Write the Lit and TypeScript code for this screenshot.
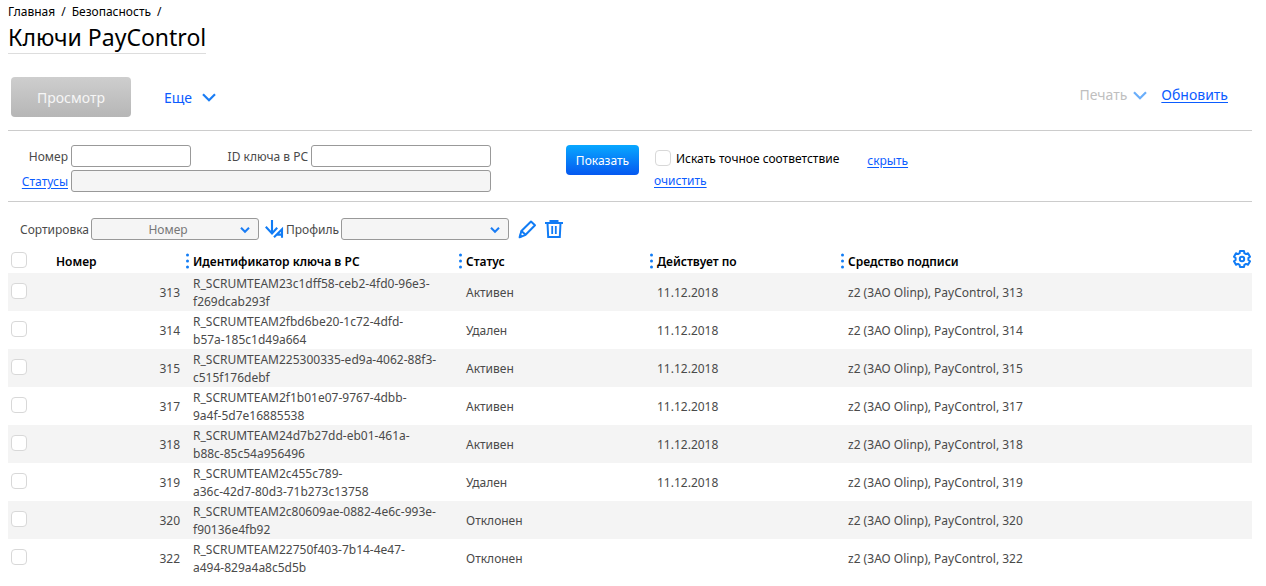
import { LitElement, html, css, svg } from "lit";
import { customElement, state } from "lit/decorators.js";

interface KeyRow {
  num: number;
  id: [string, string];
  status: string;
  until: string;
}

const ROWS: KeyRow[] = [
  { num: 313, id: ["R_SCRUMTEAM23c1dff58-ceb2-4fd0-96e3-", "f269dcab293f"], status: "Активен", until: "11.12.2018" },
  { num: 314, id: ["R_SCRUMTEAM2fbd6be20-1c72-4dfd-", "b57a-185c1d49a664"], status: "Удален", until: "11.12.2018" },
  { num: 315, id: ["R_SCRUMTEAM225300335-ed9a-4062-88f3-", "c515f176debf"], status: "Активен", until: "11.12.2018" },
  { num: 317, id: ["R_SCRUMTEAM2f1b01e07-9767-4dbb-", "9a4f-5d7e16885538"], status: "Активен", until: "11.12.2018" },
  { num: 318, id: ["R_SCRUMTEAM24d7b27dd-eb01-461a-", "b88c-85c54a956496"], status: "Активен", until: "11.12.2018" },
  { num: 319, id: ["R_SCRUMTEAM2c455c789-", "a36c-42d7-80d3-71b273c13758"], status: "Удален", until: "11.12.2018" },
  { num: 320, id: ["R_SCRUMTEAM2c80609ae-0882-4e6c-993e-", "f90136e4fb92"], status: "Отклонен", until: "" },
  { num: 322, id: ["R_SCRUMTEAM22750f403-7b14-4e47-", "a494-829a4a8c5d5b"], status: "Отклонен", until: "" },
];

const chevron = (cls: string) => html`<svg class=${cls} viewBox="0 0 14 9" aria-hidden="true">
  ${svg`<path d="M1 1.2 L7 7.2 L13 1.2" fill="none" stroke="currentColor" />`}
</svg>`;

const dots = html`<svg class="dots" width="3" height="16" viewBox="0 0 3 16" aria-hidden="true">
  <circle cx="1.5" cy="2" r="1.5" /><circle cx="1.5" cy="8" r="1.5" /><circle cx="1.5" cy="14" r="1.5" />
</svg>`;

@customElement("app-root")
export class AppRoot extends LitElement {
  @state() private selected = new Set<number>();

  static styles = css`
    :host {
      display: block;
      padding: 4px 14px 0 8px;
      background: #fff;
      color: #4a4a4a;
      font-family: "Noto Sans", "Open Sans", sans-serif;
      font-size: 12px;
      line-height: 18px;
    }
    * { box-sizing: border-box; }
    button, input, select { font: inherit; margin: 0; }
    a { color: #0b5cff; text-decoration: underline; text-underline-offset: 2px; }
    svg { display: block; flex: none; }

    .crumbs { display: flex; gap: 6px; line-height: 16px; color: #000; }
    .crumbs a { color: inherit; text-decoration: none; }
    .title {
      width: fit-content;
      margin: 0;
      padding-top: 1px;
      border-bottom: 1px solid #ddd;
      font-size: 23px;
      line-height: 32px;
      font-weight: 400;
      color: #000;
    }

    .toolbar {
      display: flex;
      align-items: center;
      padding: 23px 24px 13px 3px;
      border-bottom: 1px solid #ccc;
      font-size: 14px;
      line-height: 20px;
    }
    .view {
      width: 120px;
      height: 40px;
      padding: 2px 0 0;
      border: 0;
      border-radius: 4px;
      background: linear-gradient(#cecece, #b6b6b6);
      color: #f6f6f6;
    }
    .menu {
      display: flex;
      align-items: center;
      gap: 10px;
      padding: 1px 0 0;
      border: 0;
      background: none;
      color: #0b5cff;
    }
    .more { margin-left: 33px; }
    .right { display: flex; align-items: center; gap: 14px; margin: 0 0 5px auto; }
    .menu:disabled { color: #bfbfbf; gap: 6px; }
    .chev { width: 14px; height: 9px; color: #1a7df5; stroke-width: 2.2; }
    .menu:disabled .chev { color: #6aaefa; }

    .filter {
      display: flex;
      align-items: flex-start;
      padding: 14px 0 9px 0;
      border-bottom: 1px solid #ccc;
    }
    .fields {
      display: grid;
      grid-template-columns: 60px 120px 114px 180px;
      column-gap: 3px;
      row-gap: 3px;
      align-items: center;
      text-align: right;
    }
    .fields label, .fields a { padding-top: 1px; }
    .box {
      width: 100%;
      height: 22px;
      padding: 0 6px;
      border: 1px solid #999;
      border-radius: 3px;
      background: #fff;
      color: inherit;
    }
    .box:read-only { background: #f5f5f5; }
    .wide { grid-column: 2 / 5; }
    .show {
      width: 73px;
      height: 30px;
      margin-left: 75px;
      padding: 1px 0 0;
      border: 0;
      border-radius: 4px;
      background: linear-gradient(#08a8ff, #0558f0);
      color: #fff;
    }
    .options { margin: 5px 0 0 15px; color: #000; }
    .exact { display: flex; align-items: center; gap: 5px; }
    .clear { display: block; width: fit-content; margin-top: 4px; }
    .hide { margin: 7px 0 0 28px; }
    .tick {
      appearance: none;
      display: block;
      width: 16px;
      height: 16px;
      border: 1px solid #d8d8d8;
      border-radius: 4px;
      background: #fff;
    }
    .exact .tick { margin: 0 0 2px 1px; }
    .tick:checked { background: #1a7df5; }

    .sorting { display: flex; align-items: center; padding: 16px 0 9px 12px; }
    .sorting label { padding-top: 1px; }
    .pick { display: grid; width: 168px; margin-left: 2px; align-items: center; }
    .pick > * { grid-area: 1 / 1; }
    .pick select {
      appearance: none;
      width: 100%;
      height: 22px;
      padding: 1px 16px 0 2px;
      border: 1px solid #999;
      border-radius: 3px;
      background: #f5f5f5;
      color: #777;
      text-align: center;
      text-align-last: center;
    }
    .small { justify-self: end; width: 10px; height: 6px; margin: 2px 9px 0 0; color: #1a7df5; stroke-width: 3; pointer-events: none; overflow: visible; }
    .icon { padding: 0; border: 0; background: none; color: #117cf5; }
    .order { margin: 0 2px 0 6px; }
    .edit { margin-left: 9px; }
    .remove { margin-left: 8px; }

    table { width: 100%; table-layout: fixed; border-collapse: collapse; }
    .c-tick { width: 40px; }
    .c-num { width: 138px; }
    .c-id { width: 273px; }
    .c-mid { width: 191px; }
    .c-gear { width: 40px; }
    th { height: 24px; padding: 0; color: #000; font-weight: 600; text-align: left; }
    td { height: 38px; padding: 2px 6px 0 7px; }
    .head { display: flex; align-items: center; gap: 4px; padding-top: 1px; }
    .head .dots { margin-bottom: 2px; }
    .first { padding: 1px 0 0 8px; }
    .dots { fill: #117cf5; }
    .mark { padding: 0 0 2px 3px; }
    .num { padding-right: 6px; text-align: right; }
    tbody tr:nth-child(odd) { background: #f4f4f4; }
    .gear { display: block; margin: 0 1px 4px auto; }
  `;

  private toggle(num: number) {
    const next = new Set(this.selected);
    next.has(num) ? next.delete(num) : next.add(num);
    this.selected = next;
  }

  private toggleAll() {
    this.selected = this.selected.size === ROWS.length ? new Set() : new Set(ROWS.map((r) => r.num));
  }

  render() {
    return html`
      <nav class="crumbs">
        <a href="#home">Главная</a><span>/</span><a href="#security">Безопасность</a><span>/</span>
      </nav>
      <h1 class="title">Ключи PayControl</h1>

      <div class="toolbar">
        <button class="view" disabled>Просмотр</button>
        <button class="menu more">Еще ${chevron("chev")}</button>
        <div class="right">
          <button class="menu" disabled>Печать ${chevron("chev")}</button>
          <a href="#refresh">Обновить</a>
        </div>
      </div>

      <form class="filter" @submit=${(e: Event) => e.preventDefault()}>
        <div class="fields">
          <label for="number">Номер</label>
          <input class="box" id="number" type="text" />
          <label for="key">ID ключа в PC</label>
          <input class="box" id="key" type="text" />
          <a href="#statuses" id="statuses-label">Статусы</a>
          <input class="box wide" type="text" readonly aria-labelledby="statuses-label" />
        </div>
        <button class="show">Показать</button>
        <div class="options">
          <label class="exact"><input class="tick" type="checkbox" />Искать точное соответствие</label>
          <a class="clear" href="#clear">очистить</a>
        </div>
        <a class="hide" href="#hide">скрыть</a>
      </form>

      <div class="sorting">
        <label for="sort">Сортировка</label>
        <div class="pick">
          <select id="sort"><option>Номер</option></select>
          ${chevron("small")}
        </div>
        <button class="icon order" aria-label="Порядок сортировки">
          <svg width="19" height="20" viewBox="0 0 19 20" fill="none" stroke="currentColor" stroke-width="2.1">
            <path d="M7 1 V14 M0.8 7.8 L7 14.4 L12.2 8.8" />
            <path d="M9 18.2 L17 10.2 V18.8 M12 15.6 H17" />
          </svg>
        </button>
        <label for="profile">Профиль</label>
        <div class="pick">
          <select id="profile"><option></option></select>
          ${chevron("small")}
        </div>
        <button class="icon edit" aria-label="Изменить">
          <svg width="19" height="19" viewBox="0 0 19 19" fill="none" stroke="currentColor" stroke-width="2" stroke-linejoin="round">
            <path d="M13 1.5 L17 5.2 L7.6 14.8 L3.4 11 Z" />
            <path d="M3.4 11 L1.6 17.3 L7.6 14.8" />
            <path d="M0.8 18.2 L2 13.6 L5 16.6 Z" fill="currentColor" stroke="none" />
          </svg>
        </button>
        <button class="icon remove" aria-label="Удалить">
          <svg width="18" height="18" viewBox="0 0 18 18" fill="none" stroke="currentColor" stroke-width="2">
            <path d="M0 3 H18 M5.5 2.5 V1 H12.5 V2.5" />
            <path d="M2.5 3 L3.2 17 H14.8 L15.5 3" />
            <path d="M7.2 6 V14 M10.8 6 V14" stroke-width="1.8" />
          </svg>
        </button>
      </div>

      <table>
        <colgroup>
          <col class="c-tick" /><col class="c-num" /><col class="c-id" /><col class="c-mid" /><col class="c-mid" /><col /><col class="c-gear" />
        </colgroup>
        <thead>
          <tr>
            <th class="mark">
              <input class="tick" type="checkbox" aria-label="Выбрать все"
                .checked=${this.selected.size === ROWS.length} @change=${this.toggleAll} />
            </th>
            <th class="first">Номер</th>
            <th><div class="head">${dots}Идентификатор ключа в PC</div></th>
            <th><div class="head">${dots}Статус</div></th>
            <th><div class="head">${dots}Действует по</div></th>
            <th><div class="head">${dots}Средство подписи</div></th>
            <th>
              <button class="icon gear" aria-label="Настройки">
                <svg width="18" height="18" viewBox="0 0 18 18" fill="none" stroke="currentColor" stroke-width="2" stroke-linejoin="round">
                  <path d="M7 1 H11 L11.4 3.2 L13 4.1 L15 3.3 L17 6.7 L15.4 8.1 V9.9 L17 11.3 L15 14.7 L13 13.9 L11.4 14.8 L11 17 H7 L6.6 14.8 L5 13.9 L3 14.7 L1 11.3 L2.6 9.9 V8.1 L1 6.7 L3 3.3 L5 4.1 L6.6 3.2 Z" />
                  <circle cx="9" cy="9" r="2.2" />
                </svg>
              </button>
            </th>
          </tr>
        </thead>
        <tbody>
          ${ROWS.map(
            (r) => html`<tr>
              <td class="mark">
                <input class="tick" type="checkbox" aria-label="Выбрать ${r.num}"
                  .checked=${this.selected.has(r.num)} @change=${() => this.toggle(r.num)} />
              </td>
              <td class="num">${r.num}</td>
              <td>${r.id[0]}<br />${r.id[1]}</td>
              <td>${r.status}</td>
              <td>${r.until}</td>
              <td colspan="2">z2 (ЗАО Olinp), PayControl, ${r.num}</td>
            </tr>`
          )}
        </tbody>
      </table>
    `;
  }
}
